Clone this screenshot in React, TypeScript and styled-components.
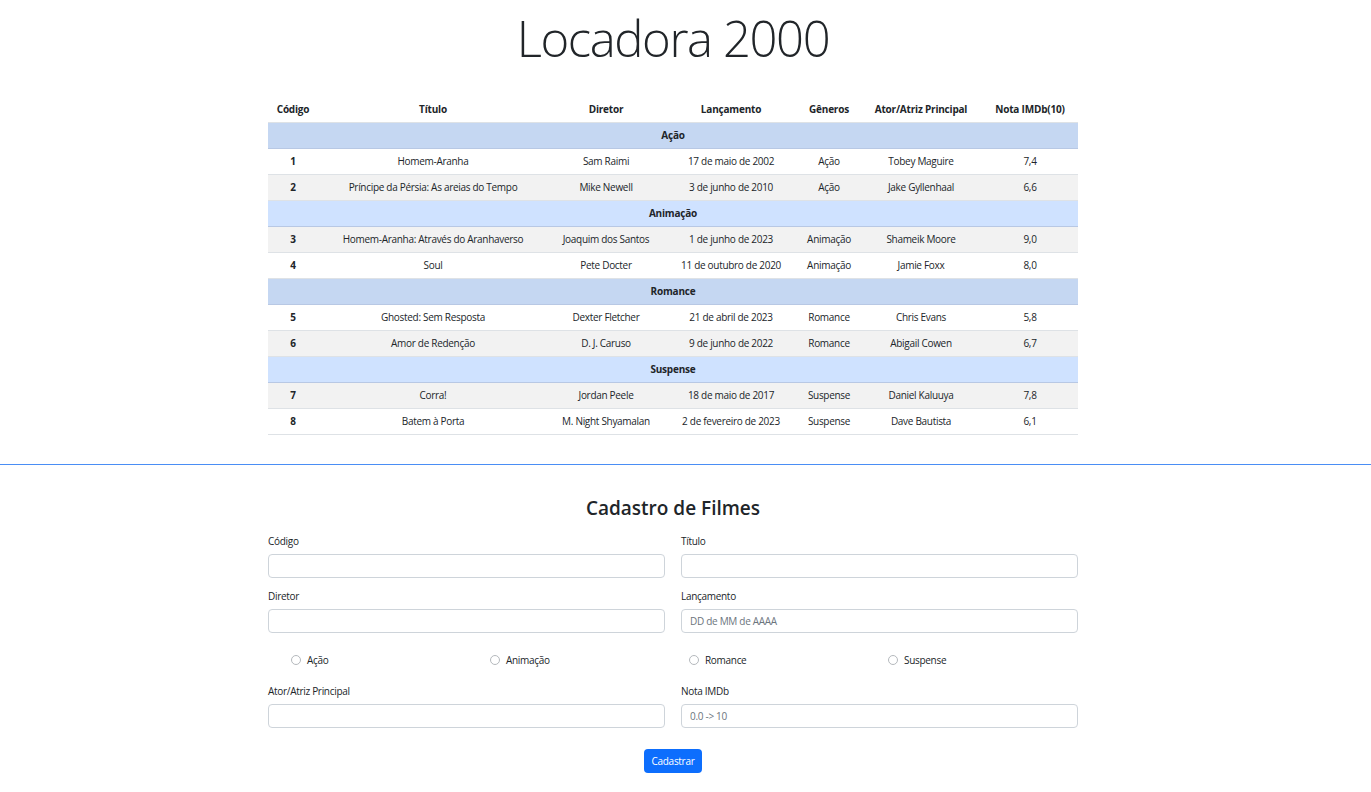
import React from "react";
import styled, { createGlobalStyle } from "styled-components";

const GlobalStyle = createGlobalStyle`
  html, body { margin: 0; padding: 0; background: #fff; }
  body {
    font-family: "Open Sans", "Noto Sans", sans-serif;
    color: #212529;
  }
  * { box-sizing: border-box; }
`;

const Section = styled.section`
  padding-right: 25px;
`;

const Container = styled.div`
  width: 810px;
  margin: 0 auto;
`;

const Title = styled.h1`
  margin: 9px 0 29px;
  font-size: 49px;
  line-height: 58px;
  letter-spacing: -1.4px;
  font-weight: 300;
  text-align: center;
  color: #212529;
`;

const Table = styled.table`
  width: 810px;
  border-collapse: collapse;
  table-layout: fixed;
  font-size: 10px;
  letter-spacing: -0.3px;
`;

const Th = styled.th<{ $w: number }>`
  width: ${(p) => p.$w}px;
  height: 26px;
  padding: 0 4px;
  font-weight: 700;
  letter-spacing: -0.2px;
  text-align: center;
  border-bottom: 1px solid #dee2e6;
  white-space: nowrap;
`;

const GroupRow = styled.tr<{ $striped: boolean }>`
  background: ${(p) => (p.$striped ? "#c5d7f2" : "#cfe2ff")};
`;

const GroupCell = styled.td`
  height: 26px;
  font-weight: 700;
  letter-spacing: -0.2px;
  text-align: center;
  border-bottom: 1px solid #b8c8e4;
`;

const Row = styled.tr<{ $striped: boolean }>`
  background: ${(p) => (p.$striped ? "#f2f2f2" : "#ffffff")};
`;

const Td = styled.td<{ $bold?: boolean }>`
  height: 26px;
  padding: 0 4px;
  text-align: center;
  white-space: nowrap;
  font-weight: ${(p) => (p.$bold ? 700 : 400)};
  border-bottom: 1px solid #dee2e6;
`;

const Divider = styled.hr`
  margin: 29px 0 0;
  border: 0;
  border-top: 1px solid #4a8ef5;
  height: 0;
`;

const FormTitle = styled.h3`
  margin: 30px 0 14px;
  font-size: 19px;
  line-height: 26px;
  font-weight: 600;
  text-align: center;
`;

const FormGrid = styled.div`
  display: grid;
  grid-template-columns: 1fr 1fr;
  column-gap: 16px;
  row-gap: 12px;
`;

const Field = styled.div`
  display: flex;
  flex-direction: column;
  gap: 6px;
`;

const Label = styled.label`
  font-size: 10px;
  letter-spacing: -0.3px;
  line-height: 13px;
`;

const Input = styled.input`
  height: 24px;
  border: 1px solid #ced4da;
  border-radius: 4px;
  padding: 0 8px;
  font-family: inherit;
  font-size: 10px;
  letter-spacing: -0.3px;
  color: #212529;
  &::placeholder { color: #6c757d; }
`;

const RadioRow = styled.div`
  grid-column: 1 / span 2;
  display: grid;
  grid-template-columns: repeat(4, 199px);
  padding: 9px 0 6px 23px;
`;

const RadioItem = styled.label`
  display: flex;
  align-items: center;
  gap: 6px;
  font-size: 10px;
  letter-spacing: -0.3px;
  line-height: 13px;
`;

const RadioCircle = styled.span`
  width: 10px;
  height: 10px;
  border: 1px solid #b5b9bd;
  border-radius: 50%;
  background: #fff;
`;

const ButtonRow = styled.div`
  display: flex;
  justify-content: center;
  margin-top: 21px;
  padding-bottom: 19px;
`;

const Button = styled.button`
  height: 24px;
  padding: 0 8px;
  background: #0d6efd;
  color: #fff;
  border: 0;
  border-radius: 4px;
  font-family: inherit;
  font-size: 10px;
  letter-spacing: -0.3px;
`;

const columns: [string, number][] = [
  ["Código", 50],
  ["Título", 230],
  ["Diretor", 116],
  ["Lançamento", 134],
  ["Gêneros", 62],
  ["Ator/Atriz Principal", 122],
  ["Nota IMDb(10)", 96],
];

type Film = [string, string, string, string, string, string, string];

const groups: { name: string; films: Film[] }[] = [
  {
    name: "Ação",
    films: [
      ["1", "Homem-Aranha", "Sam Raimi", "17 de maio de 2002", "Ação", "Tobey Maguire", "7,4"],
      ["2", "Príncipe da Pérsia: As areias do Tempo", "Mike Newell", "3 de junho de 2010", "Ação", "Jake Gyllenhaal", "6,6"],
    ],
  },
  {
    name: "Animação",
    films: [
      ["3", "Homem-Aranha: Através do Aranhaverso", "Joaquim dos Santos", "1 de junho de 2023", "Animação", "Shameik Moore", "9,0"],
      ["4", "Soul", "Pete Docter", "11 de outubro de 2020", "Animação", "Jamie Foxx", "8,0"],
    ],
  },
  {
    name: "Romance",
    films: [
      ["5", "Ghosted: Sem Resposta", "Dexter Fletcher", "21 de abril de 2023", "Romance", "Chris Evans", "5,8"],
      ["6", "Amor de Redenção", "D. J. Caruso", "9 de junho de 2022", "Romance", "Abigail Cowen", "6,7"],
    ],
  },
  {
    name: "Suspense",
    films: [
      ["7", "Corra!", "Jordan Peele", "18 de maio de 2017", "Suspense", "Daniel Kaluuya", "7,8"],
      ["8", "Batem à Porta", "M. Night Shyamalan", "2 de fevereiro de 2023", "Suspense", "Dave Bautista", "6,1"],
    ],
  },
];

export default function App() {
  let rowIndex = 0;
  const rows: React.ReactNode[] = [];
  groups.forEach((g) => {
    rowIndex++;
    rows.push(
      <GroupRow key={g.name} $striped={rowIndex % 2 === 1}>
        <GroupCell colSpan={7}>{g.name}</GroupCell>
      </GroupRow>
    );
    g.films.forEach((f) => {
      rowIndex++;
      rows.push(
        <Row key={f[0]} $striped={rowIndex % 2 === 1}>
          {f.map((v, i) => (
            <Td key={i} $bold={i === 0}>
              {v}
            </Td>
          ))}
        </Row>
      );
    });
  });

  return (
    <>
      <GlobalStyle />
      <Section>
        <Container>
          <Title>Locadora 2000</Title>
          <Table>
            <thead>
              <tr>
                {columns.map(([c, w]) => (
                  <Th key={c} $w={w}>
                    {c}
                  </Th>
                ))}
              </tr>
            </thead>
            <tbody>{rows}</tbody>
          </Table>
        </Container>
      </Section>
      <Divider />
      <Section>
        <Container>
          <FormTitle>Cadastro de Filmes</FormTitle>
          <FormGrid>
            <Field>
              <Label>Código</Label>
              <Input />
            </Field>
            <Field>
              <Label>Título</Label>
              <Input />
            </Field>
            <Field>
              <Label>Diretor</Label>
              <Input />
            </Field>
            <Field>
              <Label>Lançamento</Label>
              <Input placeholder="DD de MM de AAAA" />
            </Field>
            <RadioRow>
              {["Ação", "Animação", "Romance", "Suspense"].map((g) => (
                <RadioItem key={g}>
                  <RadioCircle />
                  {g}
                </RadioItem>
              ))}
            </RadioRow>
            <Field>
              <Label>Ator/Atriz Principal</Label>
              <Input />
            </Field>
            <Field>
              <Label>Nota IMDb</Label>
              <Input placeholder="0.0 -> 10" />
            </Field>
          </FormGrid>
          <ButtonRow>
            <Button>Cadastrar</Button>
          </ButtonRow>
        </Container>
      </Section>
    </>
  );
}
